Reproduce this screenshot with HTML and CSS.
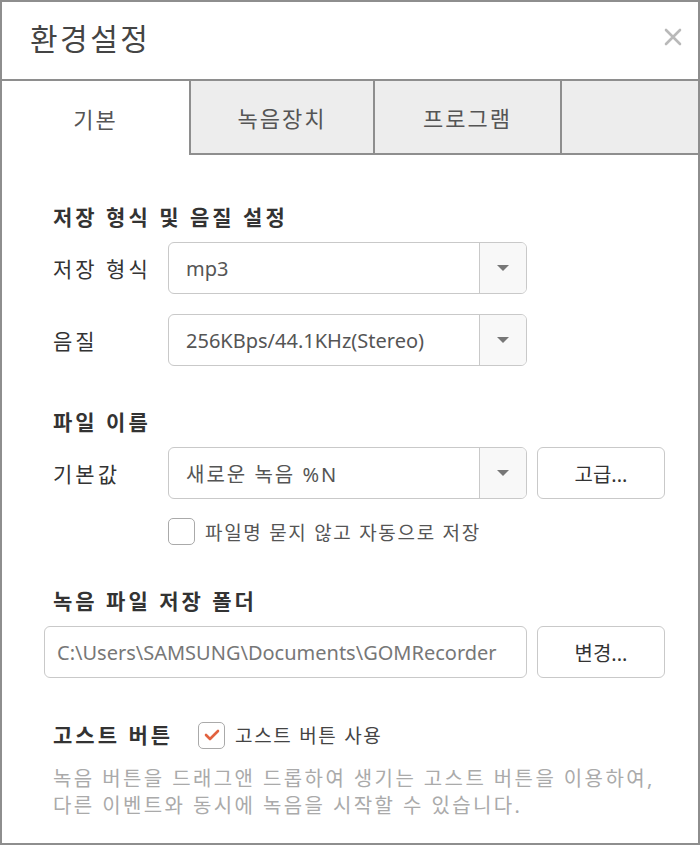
FILE: index.html
```html
<!DOCTYPE html>
<html lang="ko">
<head>
  <meta charset="UTF-8">
  <meta name="viewport" content="width=device-width, initial-scale=1.0">
  <title>환경설정</title>
  <link rel="stylesheet" href="styles.css">
</head>
<body>
  <div class="window">
    <header class="titlebar">
      <h1>환경설정</h1>
      <button class="close-btn" aria-label="닫기">
        <svg width="18" height="18" viewBox="0 0 18 18">
          <path d="M2 2 L16 16 M16 2 L2 16" stroke="#b9b9b9" stroke-width="2.6" stroke-linecap="round"/>
        </svg>
      </button>
    </header>

    <nav class="tabs">
      <div class="tab active">기본</div>
      <div class="tab">녹음장치</div>
      <div class="tab wide">프로그램</div>
      <div class="tab filler"></div>
    </nav>

    <main class="content">
      <h2 class="section-title">저장 형식 및 음질 설정</h2>
      <div class="row">
        <label class="row-label">저장 형식</label>
        <div class="select">
          <span class="select-value">mp3</span>
          <span class="select-arrow"></span>
        </div>
      </div>
      <div class="row gap">
        <label class="row-label">음질</label>
        <div class="select">
          <span class="select-value">256KBps/44.1KHz(Stereo)</span>
          <span class="select-arrow"></span>
        </div>
      </div>

      <h2 class="section-title spaced">파일 이름</h2>
      <div class="row">
        <label class="row-label">기본값</label>
        <div class="select">
          <span class="select-value ko">새로운 녹음 %N</span>
          <span class="select-arrow"></span>
        </div>
        <button class="btn">고급...</button>
      </div>
      <div class="check-row">
        <span class="checkbox"></span>
        <span class="check-text">파일명 묻지 않고 자동으로 저장</span>
      </div>

      <h2 class="section-title spaced">녹음 파일 저장 폴더</h2>
      <div class="row">
        <div class="path-input">C:\Users\SAMSUNG\Documents\GOMRecorder</div>
        <button class="btn">변경...</button>
      </div>

      <div class="ghost-row">
        <h2 class="section-title inline">고스트 버튼</h2>
        <span class="checkbox">
          <svg width="16" height="12" viewBox="0 0 16 12">
            <path d="M2 6 L6 10 L14 2" fill="none" stroke="#e2623f" stroke-width="2.6" stroke-linecap="round" stroke-linejoin="round"/>
          </svg>
        </span>
        <span class="check-text">고스트 버튼 사용</span>
      </div>
      <p class="desc">녹음 버튼을 드래그앤 드롭하여 생기는 고스트 버튼을 이용하여,<br>다른 이벤트와 동시에 녹음을 시작할 수 있습니다.</p>
    </main>
  </div>
</body>
</html>
```

FILE: styles.css
```css
* {
  box-sizing: border-box;
}
body {
  margin: 0;
  font-family: "Noto Sans", "Noto Sans CJK KR", sans-serif;
  color: #333;
  background: #fff;
}
.window {
  width: 700px;
  height: 845px;
  border: 2px solid #8e8e8e;
  display: flex;
  flex-direction: column;
  overflow: hidden;
}
.titlebar {
  height: 79px;
  border-bottom: 2px solid #8e8e8e;
  display: flex;
  align-items: center;
  justify-content: space-between;
  padding: 0 16px 8px 28px;
}
.titlebar h1 {
  margin: 0;
  font-size: 30px;
  font-weight: 400;
  color: #444;
  letter-spacing: 2.5px;
}
.close-btn {
  border: none;
  background: none;
  padding: 0;
  width: 18px;
  height: 18px;
  cursor: pointer;
}
.tabs {
  display: flex;
  height: 74px;
}
.tab {
  width: 184px;
  background: #ededed;
  border-right: 2px solid #8e8e8e;
  border-bottom: 2px solid #8e8e8e;
  display: flex;
  align-items: center;
  justify-content: center;
  font-size: 22px;
  color: #555;
  letter-spacing: 2px;
}
.tab.active {
  width: 189px;
  background: #fff;
  border-bottom: none;
}
.tab.wide {
  width: 187px;
}
.tab.filler {
  flex: 1;
  border-right: none;
}
.content {
  padding: 47px 0 0 42px;
}
.section-title {
  margin: 0 0 10px 9px;
  font-size: 21px;
  line-height: 30px;
  font-weight: 700;
  color: #333;
  letter-spacing: 3px;
}
.section-title.spaced {
  margin-top: 41px;
}
.row {
  display: flex;
  align-items: center;
  height: 52px;
}
.row.gap {
  margin-top: 20px;
}
.row-label {
  width: 115px;
  margin-left: 9px;
  font-size: 21px;
  color: #333;
  letter-spacing: 3px;
}
.select {
  width: 359px;
  height: 52px;
  border: 1px solid #c9c9c9;
  border-radius: 6px;
  display: flex;
  align-items: stretch;
}
.select-value {
  flex: 1;
  display: flex;
  align-items: center;
  padding-left: 17px;
  font-size: 20px;
  color: #555;
}
.select-value.ko {
  letter-spacing: 2px;
}
.select-arrow {
  width: 47px;
  border-left: 1px solid #c9c9c9;
  border-radius: 0 5px 5px 0;
  background: #f8f8f8;
  display: flex;
  align-items: center;
  justify-content: center;
}
.select-arrow::after {
  content: "";
  border-left: 6px solid transparent;
  border-right: 6px solid transparent;
  border-top: 6px solid #777;
}
.btn {
  width: 128px;
  height: 52px;
  margin-left: 10px;
  border: 1px solid #c9c9c9;
  border-radius: 6px;
  background: #fff;
  font-family: inherit;
  font-size: 20px;
  color: #333;
  cursor: pointer;
}
.check-row {
  display: flex;
  align-items: center;
  margin: 19px 0 0 124px;
  height: 27px;
}
.checkbox {
  width: 27px;
  height: 27px;
  border: 1px solid #aaa;
  border-radius: 5px;
  display: flex;
  align-items: center;
  justify-content: center;
  flex-shrink: 0;
}
.check-text {
  margin-left: 10px;
  font-size: 19px;
  color: #555;
  letter-spacing: 1.7px;
}
.path-input {
  width: 483px;
  height: 52px;
  border: 1px solid #c9c9c9;
  border-radius: 6px;
  display: flex;
  align-items: center;
  padding-left: 12px;
  font-size: 20px;
  color: #777;
  white-space: nowrap;
  overflow: hidden;
}
.ghost-row {
  display: flex;
  align-items: center;
  margin-top: 42px;
  height: 30px;
}
.section-title.inline {
  margin: 0 0 0 9px;
  width: 145px;
}
.ghost-row .check-text {
  color: #444;
}
.desc {
  margin: 15px 0 0 9px;
  font-size: 20px;
  line-height: 27px;
  color: #aaa;
  letter-spacing: 2.4px;
}
```
